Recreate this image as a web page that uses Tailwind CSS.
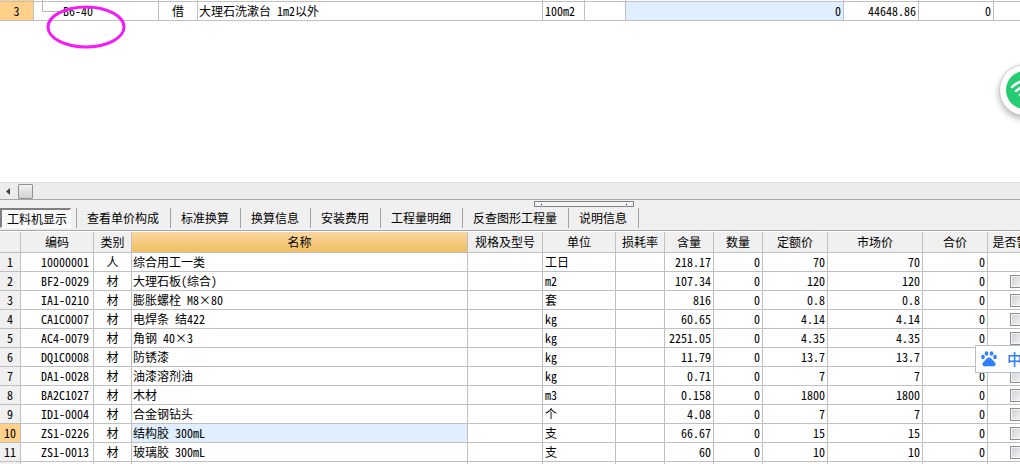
<!DOCTYPE html>
<html lang="zh-CN">
<head>
<meta charset="utf-8">
<title>工料机显示</title>
<script src="https://cdn.jsdelivr.net/npm/@tailwindcss/browser@4"></script>
</head>
<body class="relative flex h-screen flex-col overflow-hidden bg-white font-['Noto_Sans_CJK_SC',sans-serif] text-[12px] leading-[18px] text-black [font-feature-settings:'hwid']">

<section class="relative h-[182px] shrink-0 overflow-hidden">
  <table class="w-[calc(100%+26px)] table-fixed border-separate border-spacing-0 whitespace-nowrap [&_td]:border-r [&_td]:border-b [&_td]:border-[#c0c0c0] [&_td]:p-0">
    <colgroup><col class="w-[34px]"><col class="w-[125px]"><col class="w-[39px]"><col><col class="w-[42px]"><col class="w-[41px]"><col class="w-[218px]"><col class="w-[75px]"><col class="w-[75px]"><col class="w-[52px]"></colgroup>
    <tbody>
      <tr class="h-[2px] leading-[0]"><td class="bg-[#ffd08a]"></td><td></td><td></td><td></td><td></td><td></td><td></td><td></td><td></td><td></td></tr>
      <tr class="h-[19px]"><td class="bg-[#ffd08a] text-center">3</td><td class="pl-[29px]!">B6-40</td><td class="text-center">借</td><td class="pl-px!">大理石洗漱台 1m2以外</td><td class="pl-0.5!">100m2</td><td></td><td class="bg-[#dfefff] pr-0.5! text-right">0</td><td class="pr-0.5! text-right">44648.86</td><td class="pr-0.5! text-right">0</td><td></td></tr>
    </tbody>
  </table>
  <svg class="absolute top-0 left-10 h-[50px] w-[90px]" viewBox="0 0 90 50" fill="none"><path d="M2.5 0V11.500H24" stroke="#b4b4b4"/><ellipse cx="46" cy="27" rx="38" ry="20" stroke="#f41cf4" stroke-width="3"/></svg>
</section>

<div class="flex h-[17px] shrink-0 items-center border-t border-[#e0e0e0] bg-[#ececec]">
  <button class="flex h-4 w-[18px] items-center pl-1.5" aria-label="向左滚动"><svg width="4" height="7" viewBox="0 0 4 7"><path d="M4 0v7L0 3.500z" fill="#404040"/></svg></button>
  <button class="h-[15px] w-[15px] rounded-[1px] border border-[#929292] bg-linear-to-b from-[#f3f3f3] to-[#d0d0d0]" aria-label="滚动滑块"></button>
</div>

<nav class="relative flex h-8 shrink-0 items-start border-t border-b border-t-[#a8a8a8] border-b-[#a8a8a8] bg-[#f0f0f0] pt-2 whitespace-nowrap">
  <button class="h-5 w-[71px] border-t-2 border-l-2 border-r border-b border-t-[#808080] border-r-white border-b-white border-l-[#808080] bg-[#f8f8f8] pl-[5px] text-left leading-4">工料机显示</button>
  <span class="ml-[5px] h-5 w-px bg-[#a0a0a0]"></span>
  <button class="h-5 border-r border-[#a0a0a0] pr-[11px] pl-2.5">查看单价构成</button>
  <button class="h-5 border-r border-[#a0a0a0] pr-[11px] pl-2.5">标准换算</button>
  <button class="h-5 border-r border-[#a0a0a0] pr-[11px] pl-2.5">换算信息</button>
  <button class="h-5 border-r border-[#a0a0a0] pr-[11px] pl-2.5">安装费用</button>
  <button class="h-5 border-r border-[#a0a0a0] pr-[11px] pl-2.5">工程量明细</button>
  <button class="h-5 border-r border-[#a0a0a0] pr-[11px] pl-2.5">反查图形工程量</button>
  <button class="h-5 border-r border-[#a0a0a0] pr-[11px] pl-2.5">说明信息</button>
  <div class="absolute top-px left-[534px] flex h-[6px] w-[100px] items-center justify-between border border-[#808080] bg-[#f4f4f4] px-1.5"><i class="size-px bg-[#000080]"></i><i class="size-px bg-[#000080]"></i></div>
</nav>

<main class="min-h-0 flex-1 overflow-hidden pt-px">
  <table class="w-[calc(100%+26px)] table-fixed border-separate border-spacing-0 whitespace-nowrap [&_td]:border-r [&_td]:border-b [&_td]:border-[#c0c0c0] [&_td]:p-0 [&_th]:border-r [&_th]:border-b [&_th]:border-[#c0c0c0] [&_th]:p-0 [&_th]:font-normal">
    <colgroup><col class="w-[21px]"><col class="w-[73px]"><col class="w-[38px]"><col><col class="w-[75px]"><col class="w-[73px]"><col class="w-[49px]"><col class="w-[49px]"><col class="w-[49px]"><col class="w-[65px]"><col class="w-[95px]"><col class="w-[65px]"><col class="w-[58px]"></colgroup>
    <thead><tr class="h-[21px] bg-[#f0f0f0]"><th></th><th>编码</th><th>类别</th><th class="bg-linear-to-b from-[#fad69f] to-[#f1bf60]">名称</th><th>规格及型号</th><th>单位</th><th>损耗率</th><th>含量</th><th>数量</th><th>定额价</th><th>市场价</th><th>合价</th><th>是否暂估</th></tr></thead>
    <tbody id="rows"></tbody>
  </table>
</main>

<div class="absolute top-16 -right-[31px] flex size-[52px] items-center justify-center rounded-full border border-[#d0d0d0] bg-white shadow-[0_3px_6px_rgba(0,0,0,0.3)]">
  <svg width="38" height="38" viewBox="0 0 38 38" fill="none"><circle cx="19" cy="19" r="19" fill="#26cc72"/><g stroke="#fff" stroke-width="2.500" stroke-linecap="round"><path d="M6 16Q19 4 32 16"/><path d="M10 20Q19 12 28 20"/><path d="M14 24Q19 20 24 24"/></g><circle cx="19" cy="28" r="2" fill="#fff"/></svg>
</div>

<div class="absolute top-[345px] -right-5 flex h-7 w-[65px] items-center border border-[#b4bfd0] bg-white pl-[5px] text-[#2f80ff]">
  <svg width="16" height="16" viewBox="0 0 16 16" fill="currentColor"><ellipse cx="2" cy="6" rx="1.800" ry="2.200"/><ellipse cx="5.500" cy="2.500" rx="1.800" ry="2.300"/><ellipse cx="10.500" cy="2.500" rx="1.800" ry="2.300"/><ellipse cx="14" cy="6" rx="1.800" ry="2.200"/><path d="M8 6.500c1.800 0 2.800 1.700 4 3 1.500 1.500 3 2.500 2.500 4.300-.5 2-2.800 1.700-4 1.500-1.600-.2-3.400-.2-5 0-1.200.2-3.500.5-4-1.500C1 12 2.500 11 4 9.500c1.200-1.300 2.200-3 4-3z"/></svg>
  <span class="ml-2.5 text-[15px] font-medium">中</span>
</div>

<script>
const data = [
  ['10000001','人','综合用工一类','工日','218.17','70'],
  ['BF2-0029','材','大理石板(综合)','m2','107.34','120'],
  ['IA1-0210','材','膨胀螺栓 M8×80','套','816','0.8'],
  ['CA1C0007','材','电焊条 结422','kg','60.65','4.14'],
  ['AC4-0079','材','角钢 40×3','kg','2251.05','4.35'],
  ['DQ1C0008','材','防锈漆','kg','11.79','13.7'],
  ['DA1-0028','材','油漆溶剂油','kg','0.71','7'],
  ['BA2C1027','材','木材','m3','0.158','1800'],
  ['ID1-0004','材','合金钢钻头','个','4.08','7'],
  ['ZS1-0226','材','结构胶 300mL','支','66.67','15'],
  ['ZS1-0013','材','玻璃胶 300mL','支','60','10'],
  ['','','','','','']
];
document.getElementById('rows').innerHTML = data.map(([code, kind, name, unit, qty, price], i) => {
  const filled = code !== '', sel = i === 9;
  const num = v => `<td class="pr-0.5! text-right">${v}</td>`;
  const box = filled && i > 0 ? `<input type="checkbox" aria-label="是否暂估 ${name}" class="block mx-auto size-[13px] appearance-none border border-[#8e8f8f] bg-linear-to-br from-[#cbcfd5] to-[#f6f6f6] shadow-[inset_0_0_0_1px_#f4f4f4]">` : '';
  return `<tr class="h-[19px]"><td class="text-center ${sel ? 'bg-[#ffd08a]' : 'bg-[#f0f0f0]'}">${filled ? i + 1 : ''}</td><td class="pr-1! text-right">${code}</td><td class="text-center">${kind}</td><td class="pl-px! ${sel ? 'bg-[#dfefff]' : ''}">${name}</td><td></td><td class="pl-0.5!">${unit}</td><td></td>${num(qty)}${num(filled ? 0 : '')}${num(price)}${num(price)}${num(filled ? 0 : '')}<td>${box}</td></tr>`;
}).join('');
</script>
</body>
</html>
